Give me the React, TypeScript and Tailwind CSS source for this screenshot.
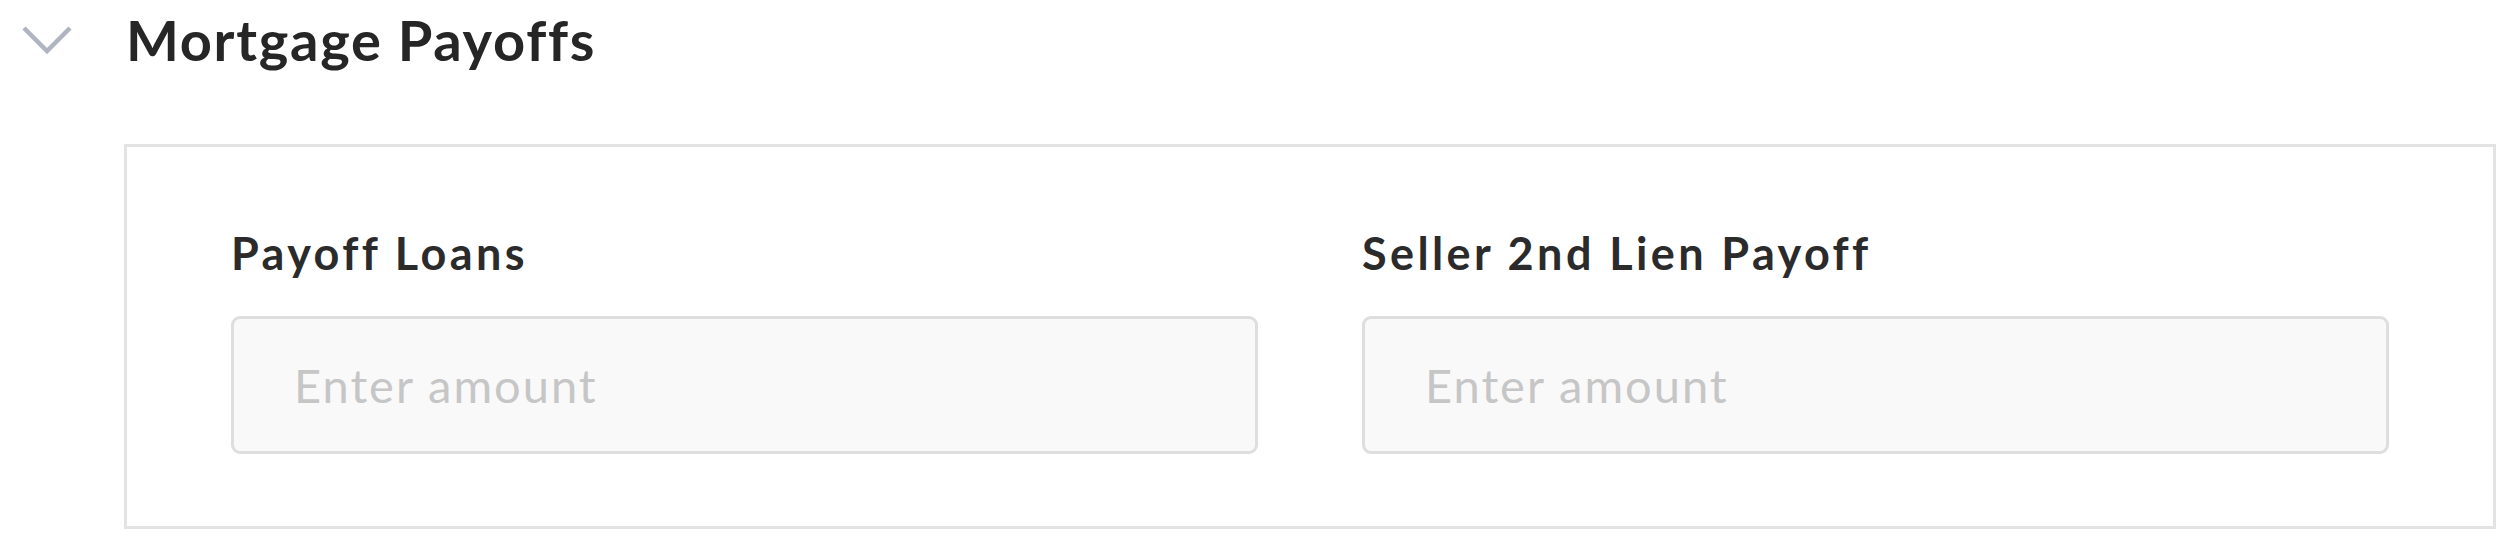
import React from "react";

function Field({ label }: { label: string }) {
  return (
    <div className="flex flex-col">
      <label className="text-[45px] leading-[54px] font-bold tracking-[3.4px] text-[#2b2b2b]">{label}</label>
      <input
        type="text"
        placeholder="Enter amount"
        className="mt-[36px] h-[138px] w-full rounded-[9px] border-[3px] border-[#dedede] bg-[#f9f9f9] px-[60px] text-[47px] font-normal tracking-[2px] text-[#2b2b2b] outline-none placeholder:text-[#c6c6c6]"
      />
    </div>
  );
}

export default function App() {
  return (
    <div className="w-[2520px] h-[548px] bg-white font-['Lato','Liberation_Sans',sans-serif]">
      <div className="flex items-center h-[80px]">
        <svg width="50" height="30" viewBox="0 0 50 30" className="ml-[22px]" fill="none">
          <polyline points="2,3 25,26 48,3" stroke="#b0b4c0" strokeWidth="4.5" />
        </svg>
        <h2 className="ml-[54px] text-[56px] leading-[80px] font-bold tracking-[1.7px] text-[#262626]">Mortgage Payoffs</h2>
      </div>
      <div className="mt-[64px] ml-[124px] mr-[24px] border-[3px] border-[#e3e3e3] px-[104px] pt-[79px] pb-[72px]">
        <div className="grid grid-cols-2 gap-[104px]">
          <Field label="Payoff Loans" />
          <Field label="Seller 2nd Lien Payoff" />
        </div>
      </div>
    </div>
  );
}
